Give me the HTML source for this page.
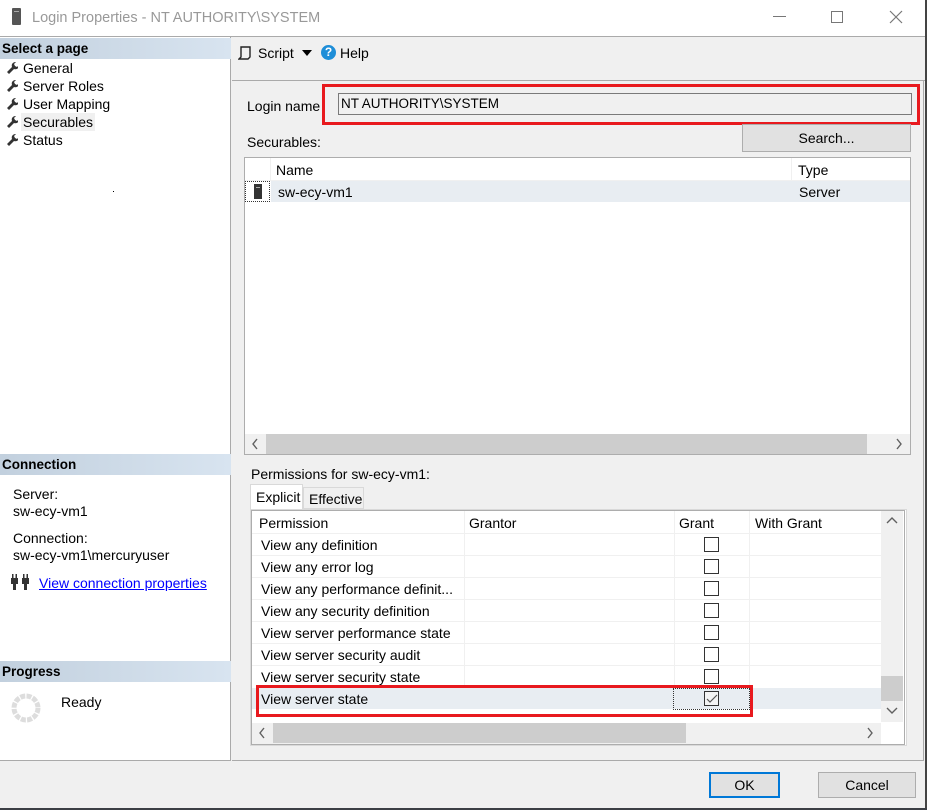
<!DOCTYPE html>
<html><head><meta charset="utf-8"><style>
*{box-sizing:border-box;margin:0;padding:0}
body{width:927px;height:810px;position:relative;background:#f0f0f0;font-family:"Liberation Sans",sans-serif;font-size:14px;color:#000;overflow:hidden}
.a{position:absolute}
.t{position:absolute;white-space:nowrap;line-height:16px}
.hdr{position:absolute;left:0;width:231px;height:21px;background:linear-gradient(90deg,#c2d0de,#d8e4f0);font-weight:bold;padding:2px 2px;line-height:17px;font-size:13.5px}
.cb{position:absolute;width:15px;height:15px;border:1px solid #333;background:#fff}
.hl{position:absolute;height:1px;background:#f0f0f0}
.vl{position:absolute;width:1px;background:#f0f0f0}
.ar{position:absolute;color:#606060;font-size:18px;line-height:18px}
</style></head><body>
<div class="a" style="left:0;top:0;width:927px;height:36px;background:#fff"></div>
<div class="a" style="left:12px;top:8px;width:9px;height:17px;background:#555;border-radius:1px"></div>
<div class="a" style="left:14px;top:11px;width:5px;height:1px;background:#aaa"></div>
<div class="t" style="left:32px;top:9px;font-size:14.5px;color:#999;line-height:18px">Login Properties - NT AUTHORITY\SYSTEM</div>
<div class="a" style="left:773px;top:16px;width:13px;height:1px;background:#777"></div>
<div class="a" style="left:831px;top:11px;width:12px;height:12px;border:1px solid #777"></div>
<svg class="a" style="left:889px;top:10px" width="14" height="14"><path d="M1 1L13 13M13 1L1 13" stroke="#777" stroke-width="1.2"/></svg>
<div class="a" style="left:925px;top:0;width:2px;height:810px;background:#444"></div>
<div class="a" style="left:0;top:808px;width:927px;height:2px;background:#3c3f45"></div>
<div class="a" style="left:0;top:36px;width:925px;height:1px;background:#aaa"></div>

<div class="a" style="left:0;top:37px;width:231px;height:724px;background:#fff;border-right:1px solid #aaa;border-bottom:1px solid #aaa"></div>
<div class="hdr" style="top:38px">Select a page</div>
<svg class="a" style="left:5px;top:61px" width="13" height="90">
<g fill="#333"><path d="M2 11l5-5c-1-3 1-5 4-5l-2 2 1 2 2 1 2-2c0 3-2 5-5 4l-5 5z"/></g>
<g fill="#333" transform="translate(0,18)"><path d="M2 11l5-5c-1-3 1-5 4-5l-2 2 1 2 2 1 2-2c0 3-2 5-5 4l-5 5z"/></g>
<g fill="#333" transform="translate(0,36)"><path d="M2 11l5-5c-1-3 1-5 4-5l-2 2 1 2 2 1 2-2c0 3-2 5-5 4l-5 5z"/></g>
<g fill="#333" transform="translate(0,54)"><path d="M2 11l5-5c-1-3 1-5 4-5l-2 2 1 2 2 1 2-2c0 3-2 5-5 4l-5 5z"/></g>
<g fill="#333" transform="translate(0,72)"><path d="M2 11l5-5c-1-3 1-5 4-5l-2 2 1 2 2 1 2-2c0 3-2 5-5 4l-5 5z"/></g>
</svg>
<div class="t" style="left:23px;top:60px">General</div>
<div class="t" style="left:23px;top:78px">Server Roles</div>
<div class="t" style="left:23px;top:96px">User Mapping</div>
<div class="a" style="left:21px;top:113px;width:74px;height:18px;background:#f0f0f0"></div>
<div class="t" style="left:23px;top:114px">Securables</div>
<div class="t" style="left:23px;top:132px">Status</div>
<div class="a" style="left:113px;top:191px;width:1px;height:1px;background:#000"></div>

<div class="hdr" style="top:454px">Connection</div>
<div class="t" style="left:13px;top:486px">Server:</div>
<div class="t" style="left:13px;top:503px">sw-ecy-vm1</div>
<div class="t" style="left:13px;top:530px">Connection:</div>
<div class="t" style="left:13px;top:547px">sw-ecy-vm1\mercuryuser</div>
<svg class="a" style="left:10px;top:573px" width="20" height="18"><g fill="#333"><rect x="1" y="5" width="7" height="6"/><rect x="12" y="5" width="7" height="6"/><rect x="3" y="11" width="3" height="6"/><rect x="14" y="11" width="3" height="6"/><rect x="2" y="1" width="1.5" height="4"/><rect x="5.5" y="1" width="1.5" height="4"/><rect x="13" y="1" width="1.5" height="4"/><rect x="16.5" y="1" width="1.5" height="4"/></g></svg>
<div class="t" style="left:39px;top:575px;color:#00f;text-decoration:underline">View connection properties</div>

<div class="hdr" style="top:661px">Progress</div>
<svg class="a" style="left:10px;top:692px" width="32" height="32"><circle cx="16" cy="16" r="12" fill="none" stroke="#ddd" stroke-width="5" stroke-dasharray="5 1.3"/></svg>
<div class="t" style="left:61px;top:694px">Ready</div>

<div class="a" style="left:232px;top:80px;width:693px;height:1px;background:#aaa"></div>
<div class="a" style="left:923px;top:80px;width:1px;height:681px;background:#aaa"></div>
<div class="a" style="left:232px;top:760px;width:692px;height:1px;background:#aaa"></div>
<svg class="a" style="left:238px;top:45px" width="14" height="16"><path d="M3 2h9v10l-2 2H1l2-2z" fill="none" stroke="#222" stroke-width="1.4"/></svg>
<div class="t" style="left:258px;top:45px;font-size:14px">Script</div>
<svg class="a" style="left:302px;top:50px" width="10" height="6"><path d="M0 0h10L5 6z" fill="#000"/></svg>
<div class="a" style="left:321px;top:45px;width:15px;height:15px;border-radius:50%;background:#1e8ed8;color:#fff;font-weight:bold;font-size:12px;line-height:15px;text-align:center">?</div>
<div class="t" style="left:340px;top:45px;font-size:14px">Help</div>

<div class="t" style="left:247px;top:98px">Login name</div>
<div class="a" style="left:322px;top:84px;width:598px;height:41px;border:3px solid #e8191e"></div>
<div class="a" style="left:338px;top:93px;width:574px;height:22px;border:1px solid #7a7a7a;background:#f0f0f0"></div>
<div class="t" style="left:341px;top:96px;font-size:13.5px">NT AUTHORITY\SYSTEM</div>
<div class="a" style="left:742px;top:124px;width:169px;height:28px;border:1px solid #adadad;background:#e1e1e1;text-align:center;line-height:26px">Search...</div>
<div class="t" style="left:247px;top:134px">Securables:</div>

<div class="a" style="left:244px;top:157px;width:667px;height:298px;border:1px solid #adadad;background:#fff"></div>
<div class="vl" style="left:270px;top:158px;height:22px"></div>
<div class="vl" style="left:791px;top:158px;height:44px"></div>
<div class="hl" style="left:245px;top:180px;width:665px"></div>
<div class="t" style="left:276px;top:162px">Name</div>
<div class="t" style="left:798px;top:162px">Type</div>
<div class="a" style="left:271px;top:181px;width:639px;height:21px;background:#e8edf2"></div>
<div class="a" style="left:245px;top:181px;width:25px;height:21px;border:1px dotted #333"></div>
<div class="a" style="left:254px;top:184px;width:8px;height:15px;background:#333"></div>
<div class="a" style="left:256px;top:187px;width:4px;height:1px;background:#aaa"></div>
<div class="t" style="left:278px;top:184px">sw-ecy-vm1</div>
<div class="t" style="left:799px;top:184px">Server</div>
<div class="a" style="left:245px;top:434px;width:665px;height:20px;background:#f0f0f0"></div>
<div class="a" style="left:266px;top:434px;width:601px;height:20px;background:#cdcdcd"></div>
<svg class="a" style="left:251px;top:438px" width="8" height="12"><path d="M6 1L2 6l4 5" fill="none" stroke="#606060" stroke-width="1.4"/></svg>
<svg class="a" style="left:895px;top:438px" width="8" height="12"><path d="M2 1l4 5-4 5" fill="none" stroke="#606060" stroke-width="1.4"/></svg>

<div class="t" style="left:251px;top:466px">Permissions for sw-ecy-vm1:</div>
<div class="a" style="left:303px;top:487px;width:61px;height:22px;border:1px solid #d9d9d9;background:#f0f0f0"></div>
<div class="t" style="left:309px;top:491px">Effective</div>
<div class="a" style="left:250px;top:484px;width:53px;height:27px;border:1px solid #d9d9d9;border-bottom:none;background:#fff"></div>
<div class="t" style="left:256px;top:489px">Explicit</div>
<div class="a" style="left:250px;top:509px;width:657px;height:237px;border:1px solid #d9d9d9;background:#fff"></div>
<div class="a" style="left:251px;top:510px;width:654px;height:235px;border:1px solid #adadad;background:#fff"></div>
<div class="hl" style="left:252px;top:533px;width:629px"></div>
<div class="vl" style="left:464px;top:511px;height:198px"></div>
<div class="vl" style="left:674px;top:511px;height:198px"></div>
<div class="vl" style="left:749px;top:511px;height:198px"></div>
<div class="t" style="left:259px;top:515px">Permission</div>
<div class="t" style="left:469px;top:515px">Grantor</div>
<div class="t" style="left:679px;top:515px">Grant</div>
<div class="t" style="left:755px;top:515px">With Grant</div>

<div class="hl" style="left:252px;top:555px;width:629px"></div>
<div class="hl" style="left:252px;top:577px;width:629px"></div>
<div class="hl" style="left:252px;top:599px;width:629px"></div>
<div class="hl" style="left:252px;top:621px;width:629px"></div>
<div class="hl" style="left:252px;top:643px;width:629px"></div>
<div class="hl" style="left:252px;top:665px;width:629px"></div>
<div class="a" style="left:252px;top:688px;width:629px;height:21px;background:#e8edf2"></div>
<div class="t" style="left:261px;top:537px">View any definition</div>
<div class="t" style="left:261px;top:559px">View any error log</div>
<div class="t" style="left:261px;top:581px">View any performance definit...</div>
<div class="t" style="left:261px;top:603px">View any security definition</div>
<div class="t" style="left:261px;top:625px">View server performance state</div>
<div class="t" style="left:261px;top:647px">View server security audit</div>
<div class="t" style="left:261px;top:669px">View server security state</div>
<div class="t" style="left:261px;top:691px">View server state</div>
<div class="cb" style="left:704px;top:537px"></div>
<div class="cb" style="left:704px;top:559px"></div>
<div class="cb" style="left:704px;top:581px"></div>
<div class="cb" style="left:704px;top:603px"></div>
<div class="cb" style="left:704px;top:625px"></div>
<div class="cb" style="left:704px;top:647px"></div>
<div class="cb" style="left:704px;top:669px"></div>
<div class="a" style="left:673px;top:688px;width:77px;height:22px;border:1px dotted #333"></div>
<div class="cb" style="left:704px;top:691px;background:#f4f4f4"></div>
<svg class="a" style="left:706px;top:694px" width="12" height="10"><path d="M1 5l3 3 7-7" fill="none" stroke="#555" stroke-width="1.2"/></svg>
<div class="a" style="left:256px;top:685px;width:497px;height:32px;border:3px solid #e8191e"></div>
<div class="a" style="left:881px;top:511px;width:22px;height:211px;background:#f0f0f0"></div>
<div class="a" style="left:881px;top:676px;width:22px;height:25px;background:#cdcdcd"></div>
<svg class="a" style="left:886px;top:516px" width="12" height="9"><path d="M1 7l5-5 5 5" fill="none" stroke="#606060" stroke-width="1.4"/></svg>
<svg class="a" style="left:886px;top:706px" width="12" height="9"><path d="M1 2l5 5 5-5" fill="none" stroke="#606060" stroke-width="1.4"/></svg>
<div class="a" style="left:252px;top:723px;width:629px;height:21px;background:#f0f0f0"></div>
<div class="a" style="left:273px;top:723px;width:413px;height:20px;background:#cdcdcd"></div>
<svg class="a" style="left:258px;top:727px" width="8" height="12"><path d="M6 1L2 6l4 5" fill="none" stroke="#606060" stroke-width="1.4"/></svg>
<svg class="a" style="left:866px;top:727px" width="8" height="12"><path d="M2 1l4 5-4 5" fill="none" stroke="#606060" stroke-width="1.4"/></svg>

<div class="a" style="left:709px;top:772px;width:71px;height:26px;border:2px solid #0078d7;background:#e1e1e1;text-align:center;line-height:22px">OK</div>
<div class="a" style="left:818px;top:772px;width:98px;height:26px;border:1px solid #adadad;background:#e1e1e1;text-align:center;line-height:24px">Cancel</div>
</body></html>
